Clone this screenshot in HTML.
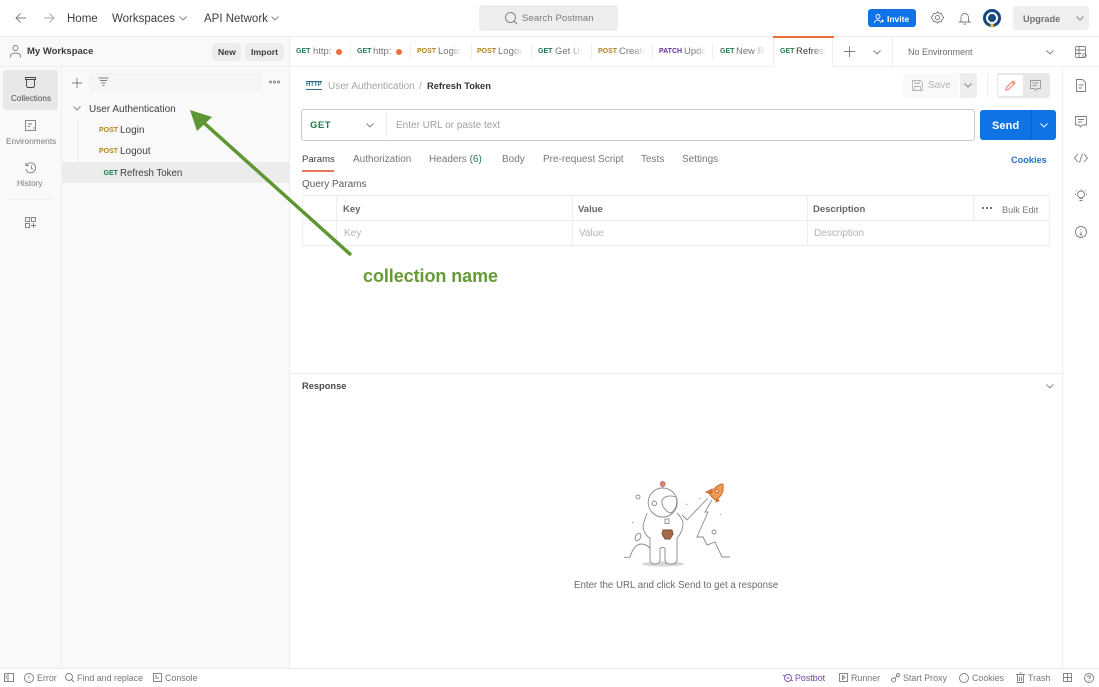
<!DOCTYPE html>
<html><head><meta charset="utf-8"><style>
html,body{margin:0;padding:0;width:1099px;height:687px;overflow:hidden;background:#fff}
body{position:relative;font-family:"Liberation Sans",sans-serif;color:#6b6b6b}
.t{position:absolute;white-space:nowrap;line-height:14px;font-size:9.5px;margin-top:2px}
.b{position:absolute}
svg{position:absolute;overflow:visible}
svg *{fill:none;stroke:#7d7d7d;stroke-width:.9}
.g{color:#1f7a4d}.o{color:#b3841d}
.m{font-size:7px;font-weight:bold}
.n{font-size:10px}
.f{-webkit-mask-image:linear-gradient(90deg,#000 55%,transparent);mask-image:linear-gradient(90deg,#000 55%,transparent);overflow:hidden}
.s{background:#f0f0f0;width:1px;height:17px;top:43px}
.c{font-size:8.9px;color:#777}
</style></head><body>
<!-- backgrounds -->
<div class="b" style="left:0;top:36px;width:290px;height:632px;background:#f9f9f9"></div>
<div class="b" style="left:0;top:36px;width:1099px;height:1px;background:#ededed"></div>
<div class="b" style="left:0;top:66px;width:1099px;height:1px;background:#f0f0f0"></div>
<div class="b" style="left:61px;top:67px;width:1px;height:601px;background:#efefef"></div>
<div class="b" style="left:289px;top:37px;width:1px;height:631px;background:#ececec"></div>
<div class="b" style="left:1062px;top:67px;width:1px;height:601px;background:#efefef"></div>
<div class="b" style="left:0;top:668px;width:1099px;height:1px;background:#ededed"></div>
<div class="b" style="left:290px;top:373px;width:772px;height:1px;background:#ececec"></div>

<!-- header -->
<svg style="left:15px;top:12px" width="12" height="12"><path d="M11 6H1M5.500 1.500 1 6l4.500 4.500"/></svg>
<svg style="left:43px;top:12px" width="12" height="12"><path style="stroke:#aaa" d="M1 6h10M6.500 1.500 11 6l-4.500 4.500"/></svg>
<div class="t" style="left:67px;top:10px;font-size:11.5px;color:#3d3d3d">Home</div>
<div class="t" style="left:112px;top:10px;font-size:11.5px;color:#3d3d3d">Workspaces</div>
<svg style="left:179px;top:16px" width="8" height="5"><path d="M.5.500 4 4l3.500-3.500"/></svg>
<div class="t" style="left:204px;top:10px;font-size:11.5px;color:#3d3d3d">API Network</div>
<svg style="left:271px;top:16px" width="8" height="5"><path d="M.5.500 4 4l3.500-3.500"/></svg>
<div class="b" style="left:479px;top:5px;width:139px;height:26px;background:#ededed;border-radius:3px"></div>
<svg style="left:505px;top:12px" width="12" height="12"><circle cx="5.500" cy="5.500" r="5"/><path d="m9 9 3 3"/></svg>
<div class="t" style="left:522px;top:10px;font-size:9.5px;color:#7b7b7b;letter-spacing:.1px">Search Postman</div>
<div class="b" style="left:868px;top:9px;width:48px;height:18px;background:#0f72e5;border-radius:3px"></div>
<svg style="left:874px;top:14px" width="9" height="9"><circle style="stroke:#fff" cx="4" cy="2.500" r="2"/><path style="stroke:#fff" d="M.5 9c0-4 6-4 6 0M7 7h3M8.500 5.500v3"/></svg>
<div class="t" style="left:887px;top:10px;font-size:8.5px;font-weight:bold;color:#fff">Invite</div>
<svg style="left:931px;top:11px" width="13" height="14"><path d="M6.500.7 8 2.500l2.300-.3.900 2.200 1.500 2.100-1.500 2.100-.9 2.200-2.300-.3-1.500 1.800L5 10.500l-2.300.3-.9-2.200L.3 6.500l1.500-2.100.9-2.200L5 2.500z"/><circle cx="6.500" cy="6.500" r="2.200"/></svg>
<svg style="left:959px;top:12px" width="12" height="13"><path d="M2 9V5.500C2 3 3.800 1.500 5.750 1.500S9.500 3 9.500 5.500V9l1.500 1H.5zM4.500 11.500c.5 1 2 1 2.500 0"/></svg>
<div class="b" style="left:983px;top:9px;width:18px;height:18px;border-radius:50%;background:#14487f"></div>
<div class="b" style="left:986px;top:12px;width:8px;height:8px;border-radius:50%;border:2px solid #fff"></div>
<div class="b" style="left:990px;top:24px;width:4px;height:3px;background:#e8b23a;border-radius:2px"></div>
<div class="b" style="left:1013px;top:6px;width:76px;height:24px;background:#efefef;border-radius:3px"></div>
<div class="t" style="left:1023px;top:10px;font-size:9.2px;font-weight:bold;color:#707070">Upgrade</div>
<svg style="left:1076px;top:16px" width="8" height="5"><path d="M.5.500 4 4l3.500-3.500"/></svg>

<!-- workspace -->
<svg style="left:10px;top:45px" width="11" height="13"><circle cx="5.500" cy="3" r="2.500"/><path d="M.5 12.500V11c0-4 10-4 10 0v1.500"/></svg>
<div class="t" style="left:27px;top:43px;font-size:9.5px;font-weight:bold;color:#3a3a3a">My Workspace</div>
<div class="b" style="left:212px;top:43px;width:29px;height:18px;background:#ededed;border-radius:3px"></div>
<div class="t" style="left:218px;top:43px;font-size:8.7px;font-weight:bold;color:#3d3d3d">New</div>
<div class="b" style="left:245px;top:43px;width:39px;height:18px;background:#ededed;border-radius:3px"></div>
<div class="t" style="left:251px;top:43px;font-size:8.7px;font-weight:bold;color:#3d3d3d">Import</div>

<!-- tabs -->
<div class="t g m" style="left:296px;top:43px">GET</div><div class="t" style="left:313px;top:43px;font-size:9.5px;color:#777">http:</div><div class="b" style="left:336px;top:49px;width:6px;height:6px;border-radius:50%;background:#ef6c3c"></div>
<div class="t g m" style="left:357px;top:43px">GET</div><div class="t" style="left:373px;top:43px;font-size:9.5px;color:#777">http:</div><div class="b" style="left:396px;top:49px;width:6px;height:6px;border-radius:50%;background:#ef6c3c"></div>
<div class="t o m" style="left:417px;top:43px">POST</div><div class="t f" style="left:438px;top:43px;width:24px;font-size:9.5px;color:#777">Login</div>
<div class="t o m" style="left:477px;top:43px">POST</div><div class="t f" style="left:498px;top:43px;width:26px;font-size:9.5px;color:#777">Logout</div>
<div class="t g m" style="left:538px;top:43px">GET</div><div class="t f" style="left:555px;top:43px;width:28px;font-size:9.5px;color:#777">Get User</div>
<div class="t o m" style="left:598px;top:43px">POST</div><div class="t f" style="left:619px;top:43px;width:26px;font-size:9.5px;color:#777">Create</div>
<div class="t m" style="left:659px;top:43px;color:#623497">PATCH</div><div class="t f" style="left:684px;top:43px;width:22px;font-size:9.5px;color:#777">Update</div>
<div class="t g m" style="left:720px;top:43px">GET</div><div class="t f" style="left:736px;top:43px;width:30px;font-size:9.5px;color:#777">New Req</div>
<div class="b s" style="left:350px"></div><div class="b s" style="left:410px"></div><div class="b s" style="left:471px"></div><div class="b s" style="left:531px"></div><div class="b s" style="left:591px"></div><div class="b s" style="left:652px"></div><div class="b s" style="left:712px"></div>
<div class="b" style="left:773px;top:37px;width:60px;height:30px;background:#fff;border-left:1px solid #eee;border-right:1px solid #eee;box-sizing:border-box"></div>
<div class="b" style="left:773px;top:36px;width:61px;height:2px;background:#f26b3a"></div>
<div class="t g m" style="left:780px;top:43px">GET</div><div class="t f" style="left:796px;top:43px;width:30px;font-size:9.5px;color:#444">Refresh</div>
<svg style="left:844px;top:46px" width="11" height="11"><path d="M5.500 0v11M0 5.500h11"/></svg>
<svg style="left:873px;top:50px" width="8" height="5"><path d="M.5.500 4 4l3.500-3.500"/></svg>
<div class="b" style="left:892px;top:37px;width:1px;height:29px;background:#eee"></div>
<div class="t" style="left:908px;top:43px;font-size:9px;color:#6b6b6b">No Environment</div>
<svg style="left:1046px;top:50px" width="8" height="5"><path d="M.5.500 4 4l3.500-3.500"/></svg>

<!-- right icons -->
<svg style="left:1075px;top:46px" width="12" height="12"><rect x=".5" y=".5" width="10" height="11" rx="1"/><path d="M.5 4h10M.5 7.500h6M4 1v10"/><circle cx="9.500" cy="9.500" r="1.800"/></svg>
<svg style="left:1076px;top:79px" width="10" height="13"><path d="M.5.500h6l3 3v9H.5zM2.500 6h5M2.500 9h3.500"/></svg>
<svg style="left:1075px;top:116px" width="12" height="12"><path d="M.5.500h11v8.500H7L5.500 11 4 9H.5zM3 3.500h6M3 6h4"/></svg>
<svg style="left:1074px;top:153px" width="14" height="10"><path d="M4 1 .5 5 4 9M10 1l3.500 4L10 9M8.500.5l-3 9"/></svg>
<svg style="left:1075px;top:189px" width="12" height="14"><circle cx="6" cy="5.500" r="3.500"/><path d="M4.500 9.500h3M4.500 11.500h3M6 0v.8M0 5.500h1M11 5.500h1M1.500 1.500l.7.700M10.500 1.500l-.7.700"/></svg>
<svg style="left:1075px;top:226px" width="12" height="12"><circle cx="6" cy="6" r="5.500"/><path d="M6 5.500v3.500M4.500 9h3M6 3v1"/></svg>

<!-- side nav -->
<div class="b" style="left:3px;top:70px;width:55px;height:40px;background:#e8e8e8;border-radius:3px"></div>
<svg style="left:25px;top:77px" width="11" height="11"><path d="M.5.500h10v2H.5zM1.500 2.500v6.500l1 1.500h6l1-1.500V2.500" style="stroke:#444"/></svg>
<div class="t" style="left:11px;top:90px;font-size:8.2px;color:#4b4b4b">Collections</div>
<svg style="left:25px;top:120px" width="11" height="11"><rect x=".5" y=".5" width="10" height="10"/><path d="M3 4h4M3 6.500h2M8 8h1.500"/></svg>
<div class="t" style="left:6px;top:133px;font-size:8.2px;color:#7a7a7a">Environments</div>
<svg style="left:25px;top:162px" width="12" height="12"><path d="M1.500 3a5 5 0 1 1-.7 4M1 .8V3.500h2.700M6.500 3.500v3l2 1"/></svg>
<div class="t" style="left:17px;top:175px;font-size:8.2px;color:#7a7a7a">History</div>
<div class="b" style="left:9px;top:199px;width:43px;height:1px;background:#eee"></div>
<svg style="left:25px;top:217px" width="11" height="11"><rect x=".5" y=".5" width="4" height="4"/><rect x="6.500" y=".5" width="4" height="4"/><rect x=".5" y="6.500" width="4" height="4"/><path d="M8.500 6v5M6 8.500h5"/></svg>

<!-- collections -->
<svg style="left:72px;top:78px" width="10" height="10"><path d="M5 0v10M0 5h10"/></svg>
<div class="b" style="left:89px;top:73px;width:173px;height:18px;background:#f5f5f5;border:1px solid #f1f1f1;box-sizing:border-box;border-radius:3px"></div>
<svg style="left:98px;top:77px" width="11" height="10"><path d="M.5 1h10M2 3.500h7M3.500 6h4M4.500 8.500h2"/></svg>
<svg style="left:269px;top:80px" width="11" height="4"><circle cx="1.500" cy="2" r="1"/><circle cx="5.500" cy="2" r="1"/><circle cx="9.500" cy="2" r="1"/></svg>
<svg style="left:73px;top:106px" width="8" height="5"><path d="M.5.500 4 4l3.500-3.500"/></svg>
<div class="t n" style="left:89px;top:101px;color:#404040">User Authentication</div>
<div class="b" style="left:62px;top:162px;width:227px;height:21px;background:#ececec"></div>
<div class="b" style="left:77px;top:119px;width:1px;height:64px;background:#ececec"></div>
<div class="t o m" style="left:99px;top:122px">POST</div><div class="t n" style="left:120px;top:122px;color:#404040">Login</div>
<div class="t o m" style="left:99px;top:143px">POST</div><div class="t n" style="left:120px;top:143px;color:#404040">Logout</div>
<div class="t g m" style="left:103.500px;top:165px">GET</div><div class="t" style="left:120px;top:165px;font-size:9.7px;color:#404040">Refresh Token</div>

<!-- request header -->
<div class="t" style="left:306px;top:79px;font-size:6px;font-weight:bold;color:#2a6f8e;border-top:1px solid #2a6f8e;border-bottom:1px solid #2a6f8e;line-height:7px">HTTP</div>
<div class="t n" style="left:328px;top:78px;color:#a5a5a5">User Authentication</div>
<div class="t n" style="left:419px;top:78px;color:#a5a5a5">/</div>
<div class="t" style="left:427px;top:77px;font-size:9.3px;font-weight:bold;color:#333">Refresh Token</div>
<div class="b" style="left:903px;top:73px;width:56px;height:25px;background:#f9f9f9;border-radius:3px 0 0 3px"></div>
<div class="b" style="left:960px;top:73px;width:17px;height:25px;background:#ededed;border-radius:0 3px 3px 0"></div>
<svg style="left:912px;top:80px" width="11" height="11"><path style="stroke:#b5b5b5" d="M.5.500h8l2 2v8H.5zM3 .5v3h4v-3M2.500 10.500V6.500h6v4"/></svg>
<div class="t n" style="left:928px;top:77px;color:#b5b5b5">Save</div>
<svg style="left:964px;top:83px" width="8" height="5"><path d="M.5.500 4 4l3.500-3.500"/></svg>
<div class="b" style="left:987px;top:73px;width:1px;height:25px;background:#f0f0f0"></div>
<div class="b" style="left:997px;top:73px;width:53px;height:25px;background:#e8e8e8;border-radius:3px"></div>
<div class="b" style="left:998px;top:75px;width:25px;height:21px;background:#fff;border-radius:2px"></div>
<svg style="left:1005px;top:80px" width="11" height="11"><path style="stroke:#e8795a" d="M.8 10.200 1.500 7.500 8 1l2 2-6.500 6.500zM7 2l2 2"/></svg>
<svg style="left:1030px;top:80px" width="11" height="11"><path style="stroke:#999" d="M.5.500h10v8H7L5.500 10.500 4 8.500H.5zM2.500 3h6M2.500 5.500h4"/></svg>

<!-- url bar -->
<div class="b" style="left:301px;top:109px;width:674px;height:32px;box-sizing:border-box;border:1px solid #c9c9c9;border-radius:3px;background:#fff"></div>
<div class="t g" style="left:310px;top:117px;font-size:9.5px;font-weight:bold;letter-spacing:.5px">GET</div>
<svg style="left:366px;top:123px" width="8" height="5"><path d="M.5.500 4 4l3.500-3.500"/></svg>
<div class="b" style="left:386px;top:113px;width:1px;height:24px;background:#ececec"></div>
<div class="t n" style="left:396px;top:117px;color:#a0a0a0">Enter URL or paste text</div>
<div class="b" style="left:980px;top:110px;width:76px;height:30px;background:#0f72e5;border-radius:3px"></div>
<div class="b" style="left:1031px;top:110px;width:1px;height:30px;background:#0a62c8"></div>
<div class="t" style="left:992px;top:117px;font-size:11px;font-weight:bold;color:#fff;letter-spacing:.1px">Send</div>
<svg style="left:1040px;top:123px" width="8" height="5"><path style="stroke:#fff" d="M.5.500 4 4l3.500-3.500"/></svg>

<!-- req tabs -->
<div class="t" style="left:302px;top:151px;font-size:9.5px;color:#3d3d3d">Params</div>
<div class="b" style="left:302px;top:170px;width:32px;height:1.500px;background:#e8775a"></div>
<div class="t n" style="left:353px;top:151px;color:#777">Authorization</div>
<div class="t n" style="left:429px;top:151px;color:#777">Headers <span style="color:#1f7a4d">(6)</span></div>
<div class="t n" style="left:502px;top:151px;color:#777">Body</div>
<div class="t n" style="left:543px;top:151px;color:#777">Pre-request Script</div>
<div class="t n" style="left:641px;top:151px;color:#777">Tests</div>
<div class="t n" style="left:682px;top:151px;color:#777">Settings</div>
<div class="t" style="left:1011px;top:151px;font-weight:bold;color:#2b70c4;font-size:9.2px">Cookies</div>
<div class="t n" style="left:302px;top:176px;color:#5c5c5c">Query Params</div>

<!-- table -->
<div class="b" style="left:302px;top:195px;width:748px;height:51px;box-sizing:border-box;border:1px solid #eee"></div>
<div class="b" style="left:303px;top:220px;width:746px;height:1px;background:#eee"></div>
<div class="b" style="left:336px;top:196px;width:1px;height:49px;background:#eee"></div>
<div class="b" style="left:572px;top:196px;width:1px;height:49px;background:#eee"></div>
<div class="b" style="left:807px;top:196px;width:1px;height:49px;background:#eee"></div>
<div class="b" style="left:973px;top:196px;width:1px;height:24px;background:#eee"></div>
<div class="t" style="left:343px;top:201px;font-weight:bold;color:#666">Key</div>
<div class="t" style="left:578px;top:201px;font-weight:bold;color:#666">Value</div>
<div class="t" style="left:813px;top:201px;font-weight:bold;color:#666">Description</div>
<div class="b" style="left:982px;top:207px;width:2px;height:2px;background:#777;box-shadow:4px 0 #777,8px 0 #777"></div>
<div class="t" style="left:1002px;top:201px;font-size:9.2px;color:#777">Bulk Edit</div>
<div class="t n" style="left:344px;top:225px;color:#b3b3b3">Key</div>
<div class="t n" style="left:579px;top:225px;color:#b3b3b3">Value</div>
<div class="t n" style="left:814px;top:225px;color:#b3b3b3">Description</div>

<!-- response -->
<div class="t" style="left:302px;top:377px;font-size:9.3px;font-weight:bold;color:#4a4a4a">Response</div>
<svg style="left:1046px;top:384px" width="8" height="5"><path d="M.5.500 4 4l3.500-3.500"/></svg>

<!-- astronaut -->
<svg style="left:600px;top:470px" width="150" height="110">
<ellipse cx="63" cy="94" rx="21" ry="2.500" style="fill:#d6d6d6;stroke:none"/>
<path style="stroke:#8a8a8a;fill:#fff" d="M47 43 43 55c0 6 3 11 7 13v22c0 3 3 4 5 4s5-1 5-4V79c0-2 5-2 5 0v11c0 3 3 4 6 4s6-1 6-4V68c4-4 6-9 6-15 0-3-4-8-6-10"/>
<circle cx="62.700" cy="32.500" r="14.500" style="fill:#fff;stroke:#8a8a8a"/>
<path style="stroke:#8a8a8a" d="M62.700 18v-2M62 30c3-4 8-5 14-3 2 5 0 13-5 16-5-1-10-7-9-13z"/>
<circle cx="54.300" cy="33.300" r="2.300" style="stroke:#8a8a8a"/>
<path style="stroke:#8a8a8a" d="M82 45l5 5 21-22M24 87.300h6C32 80 35 74.500 41 74c4 0 7 2 9 4M112 30l-7 12h3L97 67h6l4 8 8-3 7 15h8"/>
<rect x="65" y="49" width="4" height="4.500" style="stroke:#8a8a8a"/>
<circle cx="38" cy="27" r="2" style="stroke:#8a8a8a"/><circle cx="114" cy="62" r="2" style="stroke:#8a8a8a"/>
<ellipse cx="38" cy="67" rx="2.500" ry="4" transform="rotate(30 38 67)" style="stroke:#8a8a8a"/>
<circle cx="32.700" cy="52.700" r=".6" style="fill:#888;stroke:none"/><circle cx="86.700" cy="34.300" r=".6" style="fill:#888;stroke:none"/><circle cx="100" cy="28.300" r=".6" style="fill:#888;stroke:none"/><circle cx="120.700" cy="44.300" r=".6" style="fill:#888;stroke:none"/>
<circle cx="62.700" cy="14" r="2.500" style="fill:#d9866a;stroke:#b77"/>
<path style="fill:#a86a4a;stroke:#7b4a30" d="M63 60h9l1 4-3 5h-5l-3-5z"/>
<path style="fill:#e67a3c;stroke:#c46a2a" d="M106 22l6-3-2 5zM116 32l1-6 2 5z"/>
<path style="fill:#ee9a55;stroke:#c46a2a" d="M122 14c-5 1-9 5-12 11l5 5c6-3 9-7 8-16z"/>
<circle cx="117" cy="21" r="1.500" style="fill:#fff;stroke:#c46a2a"/>
</svg>
<div class="t" style="left:574px;top:577px;font-size:9.7px;color:#6b6b6b">Enter the URL and click Send to get a response</div>

<!-- arrow -->
<svg style="left:0;top:0" width="1099" height="687"><path style="stroke:#5e9731;stroke-width:3.500" d="M351 255 203 122"/><path style="fill:#5e9731;stroke:none" d="M190 110 212 117 197 131z"/></svg>
<div class="t" style="left:363px;top:263px;font-size:18px;line-height:22px;font-weight:bold;color:#669a35;letter-spacing:-.07px">collection name</div>

<!-- footer -->
<svg style="left:4px;top:673px" width="10" height="9"><rect x=".5" y=".5" width="9" height="8"/><path d="M4 .5v8M1.500 3h1.500M1.500 5h1.500"/></svg>
<svg style="left:24px;top:673px" width="10" height="10"><circle cx="5" cy="5" r="4.500"/><path d="M5 2.500v3M5 7v.8"/></svg>
<div class="t c" style="left:37px;top:669px">Error</div>
<svg style="left:65px;top:673px" width="9" height="10"><circle cx="4" cy="4" r="3.500"/><path d="m6.500 6.500 2.500 2.500"/></svg>
<div class="t c" style="left:77px;top:669px">Find and replace</div>
<svg style="left:153px;top:673px" width="9" height="9"><rect x=".5" y=".5" width="8" height="8"/><path d="M2 3h2M2 5h4"/></svg>
<div class="t c" style="left:165px;top:669px">Console</div>
<svg style="left:783px;top:673px" width="10" height="10"><circle style="stroke:#7b4bb5" cx="5" cy="5" r="3.500"/><path style="stroke:#7b4bb5" d="M0 2l2 1M10 8 8 7M3.500 5h3"/></svg>
<div class="t c" style="left:795px;top:669px;color:#6d45a3">Postbot</div>
<svg style="left:839px;top:673px" width="9" height="9"><rect x=".5" y=".5" width="8" height="8"/><path d="M3.500 2.500 6 4.500 3.500 6.500z"/></svg>
<div class="t c" style="left:851px;top:669px">Runner</div>
<svg style="left:891px;top:673px" width="9" height="10"><circle cx="2.500" cy="7" r="2"/><circle cx="7" cy="2" r="1.500"/><path d="M4 5.500 6 3"/></svg>
<div class="t c" style="left:903px;top:669px">Start Proxy</div>
<svg style="left:959px;top:673px" width="10" height="10"><circle cx="5" cy="5" r="4.500"/><path d="M3 3.500h.5M6 6h.5M3.500 7h.5"/></svg>
<div class="t c" style="left:972px;top:669px">Cookies</div>
<svg style="left:1016px;top:673px" width="9" height="10"><path d="M0 1.500h9M1.500 1.500v8h6v-8M3.500 0h2M3.500 3.500v4.500M5.500 3.500v4.500"/></svg>
<div class="t c" style="left:1028px;top:669px">Trash</div>
<svg style="left:1063px;top:673px" width="9" height="9"><rect x=".5" y=".5" width="8" height="8"/><path d="M.5 4.500h8M4.500.5v8"/></svg>
<svg style="left:1084px;top:673px" width="10" height="10"><circle cx="5" cy="5" r="4.500"/><path d="M3.500 4C3.500 2.500 6.500 2.500 6.500 4 6.500 5 5 5 5 6M5 7v.8"/></svg>
</body></html>
